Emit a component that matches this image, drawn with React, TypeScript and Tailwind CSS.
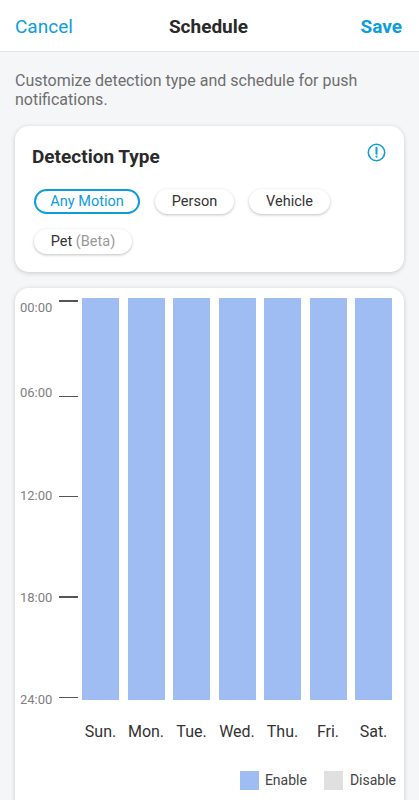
const days = ["Sun.", "Mon.", "Tue.", "Wed.", "Thu.", "Fri.", "Sat."];

const times = [
  { label: "00:00", className: "mt-[1.5px]" },
  { label: "06:00", className: "mt-[69.5px]" },
  { label: "12:00", className: "mt-[86.5px]" },
  { label: "18:00", className: "mt-[86.5px]" },
  { label: "24:00", className: "mt-[86px]" },
];

const ticks = ["mt-[2px]", "mt-[94px]", "mt-[98.5px]", "mt-[99px]", "mt-[99px]"];

function Chip({ active, className, children }: { active?: boolean; className: string; children: React.ReactNode }) {
  return (
    <div
      className={[
        "flex h-[25px] items-center justify-center rounded-full bg-white text-[14.5px]",
        active ? "border-2 border-[#0d9ddb] text-[#0d9ddb]" : "text-[#333] shadow-[0_1px_3px_rgba(0,0,0,0.25)]",
        className,
      ].join(" ")}
    >
      {children}
    </div>
  );
}

export default function App() {
  return (
    <div className="h-[800px] w-[419px] overflow-hidden bg-[#f5f6f8] font-['Roboto',sans-serif]">
      {/* Nav bar */}
      <div className="flex h-[52px] items-center border-b border-[#e3e3e5] bg-white pt-[4px] pr-[17px] pl-[15px]">
        <span className="w-[70px] text-[19px] text-[#0d9ddb]">Cancel</span>
        <span className="flex-1 text-center text-[19px] font-bold text-[#2a2a2a]">Schedule</span>
        <span className="w-[70px] text-right text-[19px] font-bold text-[#0d9ddb]">Save</span>
      </div>

      <p className="mt-[19px] px-[15px] text-[16px] leading-[19px] text-[#6e6e6e]">
        Customize detection type and schedule for push notifications.
      </p>

      {/* Detection type */}
      <div className="relative mx-[15px] mt-[17px] h-[146px] rounded-[14px] bg-white px-[17px] pt-[20px] shadow-[0_1px_5px_rgba(0,0,0,0.18)]">
        <h2 className="text-[19px] leading-[22px] font-bold text-[#2a2a2a]">Detection Type</h2>
        <svg className="absolute top-[17px] right-[18px] h-[19px] w-[19px]" viewBox="0 0 19 19" fill="none">
          <circle cx="9.5" cy="9.5" r="8.2" stroke="#0d9ddb" strokeWidth="1.6" />
          <path d="M9.5 4.8v6" stroke="#0d9ddb" strokeWidth="2" strokeLinecap="round" />
          <circle cx="9.5" cy="13.6" r="1.15" fill="#0d9ddb" />
        </svg>
        <div className="mt-[21px] flex flex-wrap gap-x-[15px] gap-y-[15px] pl-[2px]">
          <Chip active className="w-[106px]">Any Motion</Chip>
          <Chip className="w-[79px]">Person</Chip>
          <Chip className="w-[81px]">Vehicle</Chip>
          <Chip className="w-[98px]">
            Pet&nbsp;<span className="text-[#999]">(Beta)</span>
          </Chip>
        </div>
      </div>

      {/* Schedule chart */}
      <div className="mx-[15px] mt-[16px] h-[540px] rounded-[14px] bg-white shadow-[0_1px_5px_rgba(0,0,0,0.18)]">
        <div className="flex pt-[10px]">
          <div className="flex w-[44px] flex-col pl-[5px]">
            {times.map((t) => (
              <span key={t.label} className={`${t.className} text-[13px] leading-[16px] text-[#808080]`}>
                {t.label}
              </span>
            ))}
          </div>
          <div className="flex w-[23px] flex-col">
            {ticks.map((t, i) => (
              <div key={i} className={`${t} h-[1.5px] w-[19px] bg-[#555]`} />
            ))}
          </div>
          <div className="flex h-[402px] gap-[8.5px]">
            {days.map((d) => (
              <div key={d} className="h-full w-[37px] bg-[#9fbdf3]" />
            ))}
          </div>
        </div>

        <div className="mt-[14px] flex gap-[8.5px] pl-[67px]">
          {days.map((d) => (
            <span key={d} className="flex w-[37px] justify-center text-[16px] leading-[20px] whitespace-nowrap text-[#333]">
              {d}
            </span>
          ))}
        </div>

        <div className="mt-[28px] flex items-center justify-end pr-[8px] text-[14px] text-[#444]">
          <div className="h-[19px] w-[19px] bg-[#9fbdf3]" />
          <span className="ml-[6px]">Enable</span>
          <div className="ml-[17px] h-[19px] w-[19px] bg-[#e0e0e0]" />
          <span className="ml-[7px]">Disable</span>
        </div>
      </div>
    </div>
  );
}
